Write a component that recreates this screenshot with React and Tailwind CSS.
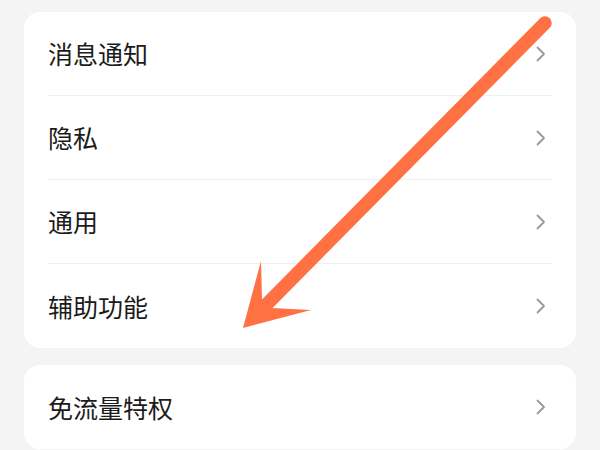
const items = ["消息通知", "隐私", "通用", "辅助功能"];

function Chevron() {
  return (
    <svg width="10" height="16" viewBox="0 0 10 16" fill="none" className="mr-[6px] shrink-0">
      <path d="M1.5 1.5L8 8l-6.5 6.5" stroke="#9a9a9a" strokeWidth="1.8" strokeLinecap="round" strokeLinejoin="round" />
    </svg>
  );
}

function Row({ label, last }) {
  return (
    <div
      className={
        "flex h-[84px] items-center justify-between " +
        (last ? "" : "border-b border-[#efefef]")
      }
    >
      <span className="text-[25px] text-[#1b1b1b] leading-none">{label}</span>
      <Chevron />
    </div>
  );
}

export default function App() {
  return (
    <div
      className="relative h-[450px] w-[600px] overflow-hidden bg-[#f4f4f4] px-6 pt-3"
      style={{ fontFamily: '"Noto Sans CJK SC", "Noto Sans", sans-serif' }}
    >
      {/* 设置列表 */}
      <div className="rounded-2xl bg-white px-6">
        {items.map((label, i) => (
          <Row key={label} label={label} last={i === items.length - 1} />
        ))}
      </div>

      <div className="mt-[17px] rounded-2xl bg-white px-6">
        <Row label="免流量特权" last />
      </div>

      {/* 指示箭头 */}
      <svg
        className="pointer-events-none absolute left-0 top-0"
        width="600"
        height="450"
        viewBox="0 0 600 450"
      >
        <line x1="545" y1="23" x2="267" y2="304" stroke="#ff7043" strokeWidth="13.5" strokeLinecap="round" />
        <polygon points="243,328 261,261 262,300 271,308 311,310" fill="#ff7043" />
      </svg>
    </div>
  );
}
